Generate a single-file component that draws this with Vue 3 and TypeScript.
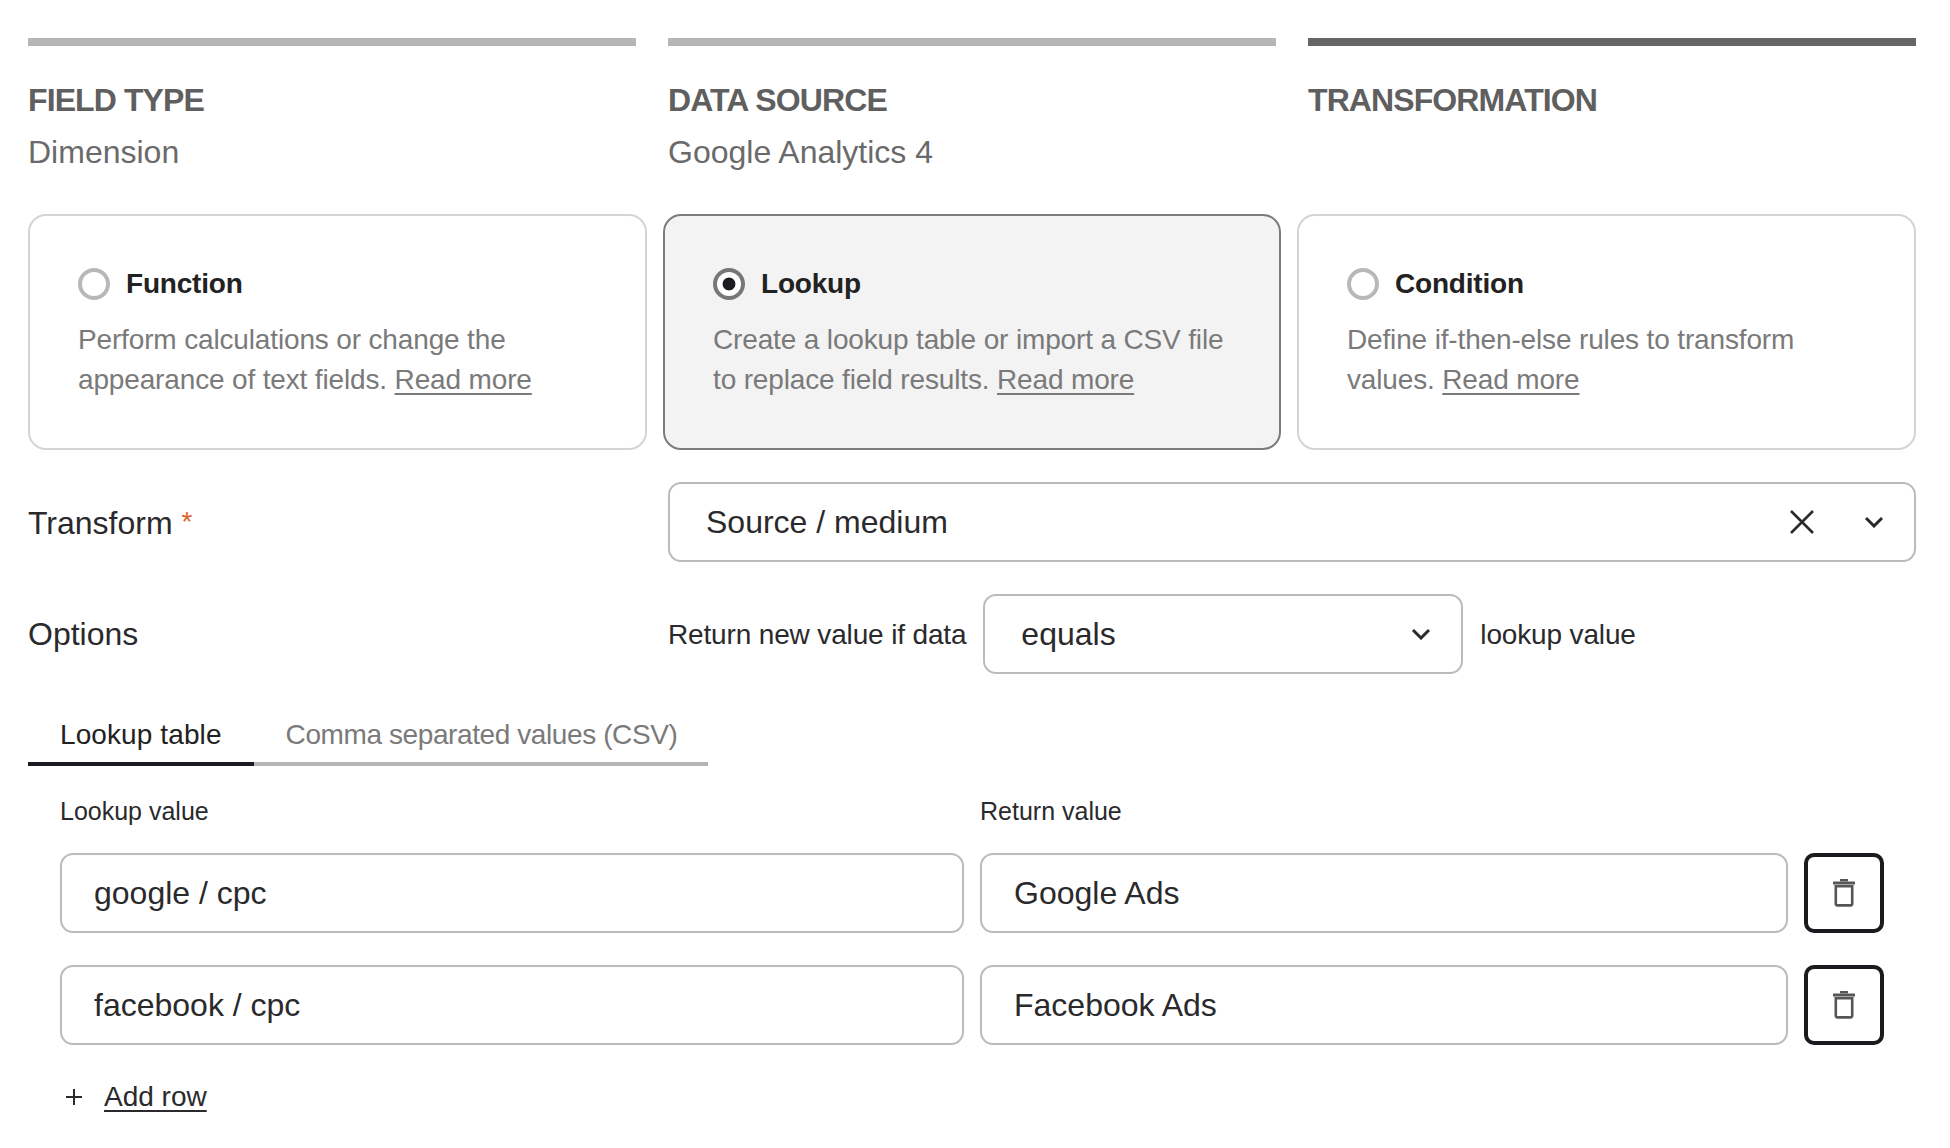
<script setup lang="ts">
interface Step {
  title: string
  value: string
  active: boolean
}

interface Method {
  name: string
  line1: string
  line2: string
  selected: boolean
}

interface Row {
  lookup: string
  result: string
}

const steps: Step[] = [
  { title: 'FIELD TYPE', value: 'Dimension', active: false },
  { title: 'DATA SOURCE', value: 'Google Analytics 4', active: false },
  { title: 'TRANSFORMATION', value: '', active: true },
]

const methods: Method[] = [
  { name: 'Function', line1: 'Perform calculations or change the', line2: 'appearance of text fields.', selected: false },
  { name: 'Lookup', line1: 'Create a lookup table or import a CSV file', line2: 'to replace field results.', selected: true },
  { name: 'Condition', line1: 'Define if-then-else rules to transform', line2: 'values.', selected: false },
]

const rows: Row[] = [
  { lookup: 'google / cpc', result: 'Google Ads' },
  { lookup: 'facebook / cpc', result: 'Facebook Ads' },
]
</script>

<template>
  <div class="page">
    <div class="steps">
      <div v-for="step in steps" :key="step.title" :class="{ step: true, step__active: step.active }">
        <div class="step__title">{{ step.title }}</div>
        <div class="step__value">{{ step.value }}</div>
      </div>
    </div>

    <div class="methods">
      <div v-for="m in methods" :key="m.name" :class="{ method: true, method__selected: m.selected }">
        <div class="method__head">
          <span class="radio"></span>
          <span class="method__name">{{ m.name }}</span>
        </div>
        <p class="method__desc">{{ m.line1 }}<br />{{ m.line2 }} <a>Read more</a></p>
      </div>
    </div>

    <div class="form-row">
      <div class="form-label">Transform <span class="required">*</span></div>
      <div class="select select__wide">
        <span class="select__text">Source / medium</span>
        <svg class="icon-x" viewBox="0 0 24 24" fill="none">
          <path d="M1 1L23 23M23 1L1 23" stroke="#2a2a2c" stroke-width="2.6" />
        </svg>
        <svg class="chevron" viewBox="0 0 20 12" fill="none">
          <path d="M2 2L10 10L18 2" stroke="#2a2a2c" stroke-width="3" />
        </svg>
      </div>
    </div>

    <div class="form-row">
      <div class="form-label">Options</div>
      <div class="options">
        <span class="small-text">Return new value if data</span>
        <div class="select select__short">
          <span class="select__text">equals</span>
          <svg class="chevron" viewBox="0 0 20 12" fill="none">
            <path d="M2 2L10 10L18 2" stroke="#2a2a2c" stroke-width="3" />
          </svg>
        </div>
        <span class="small-text">lookup value</span>
      </div>
    </div>

    <div class="tabs">
      <div class="tab tab__active">Lookup table</div>
      <div class="tab">Comma separated values (CSV)</div>
    </div>

    <div class="table">
      <div class="table__label">Lookup value</div>
      <div class="table__label table__label--span">Return value</div>
      <template v-for="row in rows" :key="row.lookup">
        <div class="input">{{ row.lookup }}</div>
        <div class="input">{{ row.result }}</div>
        <button class="trash" type="button" aria-label="Delete row">
          <svg viewBox="0 0 22 28" width="22" height="28" fill="none">
            <path d="M7 1.2H15" stroke="#555" stroke-width="2.4" />
            <path d="M0 4H22" stroke="#555" stroke-width="3" />
            <path d="M2.8 7.2V24.4A2 2 0 0 0 4.8 26.4H17.2A2 2 0 0 0 19.2 24.4V7.2Z" stroke="#555" stroke-width="2.6" />
          </svg>
        </button>
      </template>
    </div>

    <div class="add-row">
      <svg viewBox="0 0 18 18" width="18" height="18" fill="none">
        <path d="M9 1V17M1 9H17" stroke="#2a2a2c" stroke-width="2" />
      </svg>
      <a>Add row</a>
    </div>
  </div>
</template>

<style>
body {
  background: #fff;
}
</style>

<style scoped>
.page {
  padding: 38px 34px 0 28px;
  font-family: "Liberation Sans", Arial, sans-serif;
  color: #2a2a2c;
  box-sizing: border-box;
  width: 1950px;
  height: 1148px;
  overflow: hidden;
}
.steps {
  display: grid;
  grid-template-columns: repeat(3, 1fr);
  gap: 32px;
}
.step {
  box-sizing: border-box;
  border-top: 8px solid #b6b6b6;
  padding-top: 34px;
  height: 134px;
}
.step__active {
  border-top-color: #666;
}
.step__title {
  font-size: 32px;
  font-weight: 700;
  line-height: 40px;
  letter-spacing: -0.9px;
  color: #5f5f5f;
}
.step__value {
  margin-top: 12px;
  font-size: 32px;
  line-height: 40px;
  color: #6a6a6a;
}
.methods {
  display: grid;
  grid-template-columns: 619px 618px 619px;
  gap: 16px;
  margin-top: 42px;
}
.method {
  box-sizing: border-box;
  height: 236px;
  padding: 52px 48px;
  border: 2px solid #d4d4d4;
  border-radius: 18px;
}
.method__selected {
  background: #f3f3f3;
  border-color: #7c7c7c;
}
.method__head {
  display: flex;
  align-items: center;
  gap: 16px;
  height: 32px;
}
.radio {
  box-sizing: border-box;
  width: 32px;
  height: 32px;
  border: 4px solid #b8b8b8;
  border-radius: 50%;
  background: #fff;
}
.method__selected .radio {
  border-color: #777;
  background: radial-gradient(circle, #1d1d1f 0 6px, #fff 6.8px);
}
.method__name {
  font-size: 28px;
  font-weight: 700;
  letter-spacing: -0.2px;
  color: #222;
}
.method__desc {
  margin: 20px 0 0;
  font-size: 28px;
  line-height: 40px;
  letter-spacing: -0.15px;
  color: #7a7a7a;
  white-space: nowrap;
}
.method__desc a {
  text-decoration: underline;
  text-underline-offset: 4px;
}
.form-row {
  display: grid;
  grid-template-columns: 640px 1fr;
  align-items: center;
  margin-top: 32px;
}
.form-label {
  font-size: 32px;
  line-height: 40px;
}
.required {
  color: #e0622a;
  font-size: 28px;
  vertical-align: 3px;
}
.select {
  box-sizing: border-box;
  display: flex;
  align-items: center;
  height: 80px;
  padding-left: 36px;
  background: #fff;
  border: 2px solid #bbb;
  border-radius: 13px;
}
.select__text {
  flex: 1;
  font-size: 32px;
}
.select__wide {
  padding-right: 30px;
}
.select__short {
  width: 480px;
  padding-right: 30px;
}
.icon-x {
  width: 24px;
  height: 24px;
  margin-right: 50px;
}
.chevron {
  width: 20px;
  height: 12px;
}
.options {
  display: flex;
  align-items: center;
  gap: 17px;
}
.small-text {
  padding-top: 2px;
  font-size: 28px;
  letter-spacing: -0.15px;
  white-space: nowrap;
}
.tabs {
  display: flex;
  width: 680px;
  margin-top: 41px;
  border-bottom: 4px solid #b6b6b6;
}
.tab {
  padding: 0 32px 7px;
  margin-bottom: -4px;
  border-bottom: 4px solid transparent;
  font-size: 28px;
  line-height: 40px;
  letter-spacing: -0.4px;
  color: #7a7a7a;
  white-space: nowrap;
}
.tab__active {
  border-bottom-color: #1a1a22;
  letter-spacing: 0.1px;
  color: #222;
}
.table {
  display: grid;
  grid-template-columns: 904px 808px 80px;
  gap: 32px 16px;
  margin: 27px 0 0 32px;
}
.table__label {
  margin-bottom: -8px;
  font-size: 25px;
  line-height: 36px;
  letter-spacing: 0;
}
.table__label--span {
  grid-column: span 2;
}
.input {
  box-sizing: border-box;
  display: flex;
  align-items: center;
  height: 80px;
  padding-left: 32px;
  border: 2px solid #bbb;
  border-radius: 13px;
  font-size: 32px;
}
.trash {
  box-sizing: border-box;
  display: flex;
  align-items: center;
  justify-content: center;
  width: 80px;
  height: 80px;
  padding: 0;
  background: #fff;
  border: 4px solid #1a1a1f;
  border-radius: 10px;
}
.add-row {
  display: flex;
  align-items: center;
  gap: 21px;
  margin: 32px 0 0 37px;
  font-size: 28px;
  line-height: 40px;
  letter-spacing: 0;
}
.add-row a {
  text-decoration: underline;
  text-underline-offset: 4px;
}
</style>
